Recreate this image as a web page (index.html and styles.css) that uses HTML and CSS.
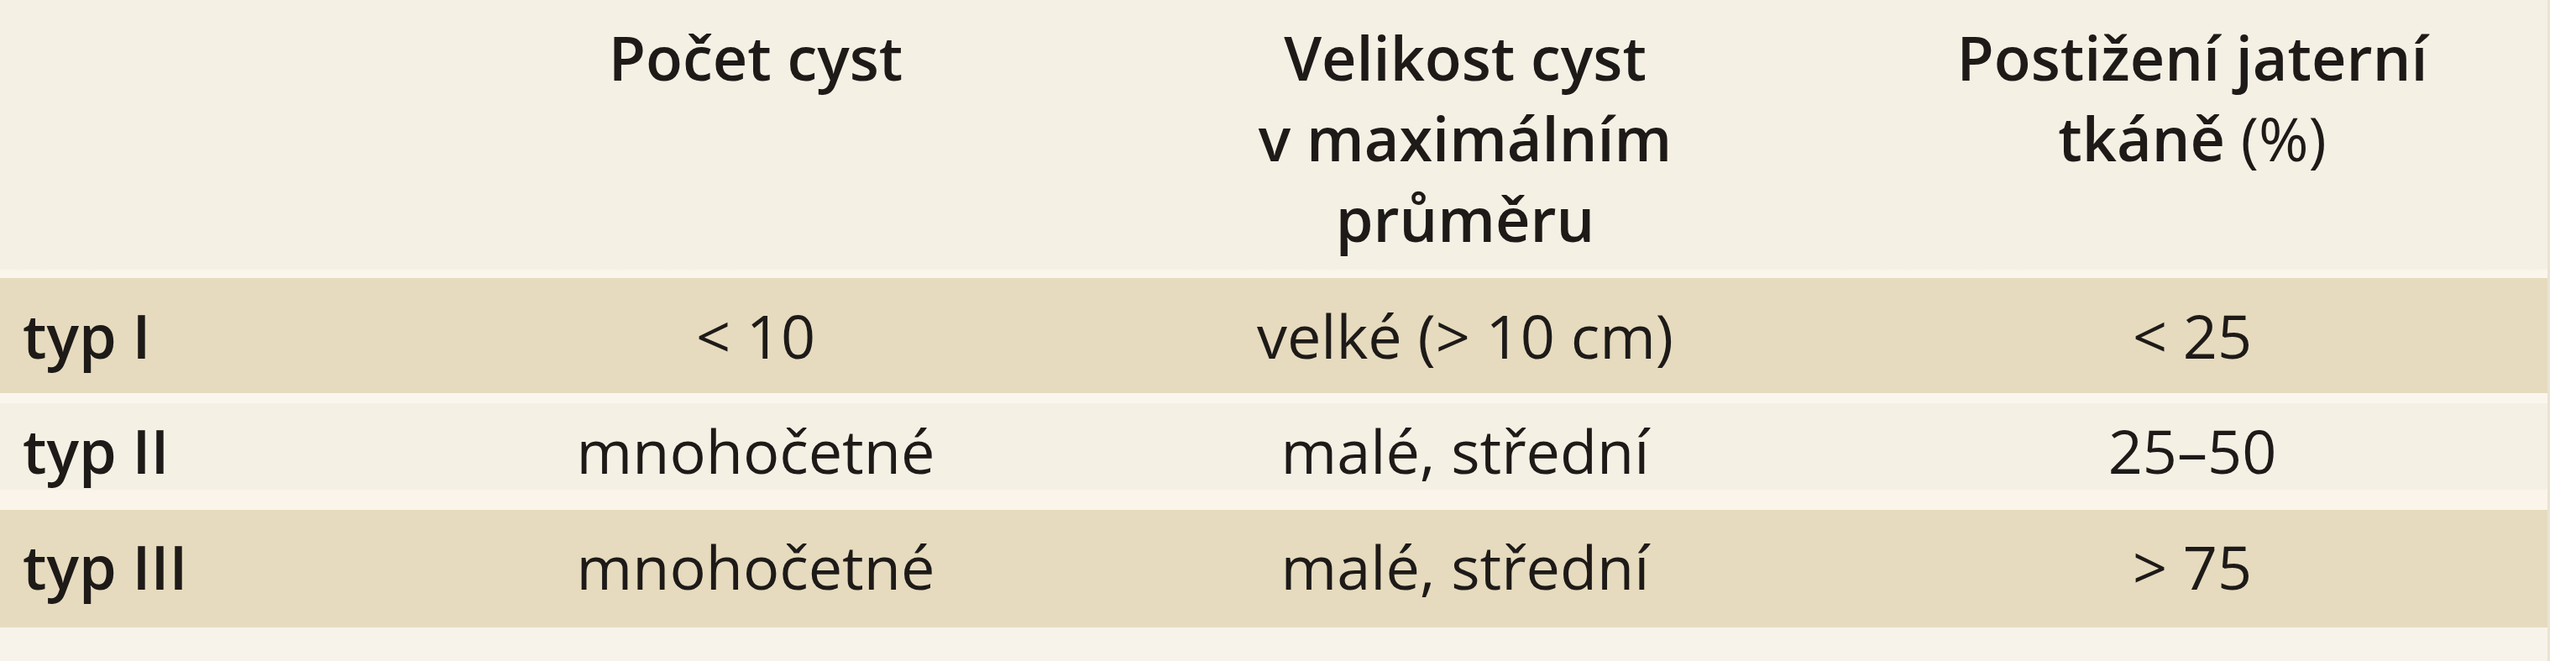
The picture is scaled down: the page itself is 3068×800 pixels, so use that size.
FILE: index.html
```html
<!DOCTYPE html>
<html lang="cs">
<head>
<meta charset="utf-8">
<title>Typy cyst</title>
<link rel="stylesheet" href="styles.css">
</head>
<body>
<div class="table">
  <div class="row head">
    <div class="cell label"></div>
    <div class="cell">Počet cyst</div>
    <div class="cell">Velikost cyst<br>v maximálním<br>průměru</div>
    <div class="cell">Postižení jaterní<br>tkáně <span class="reg">(%)</span></div>
  </div>
  <div class="row tan r1">
    <div class="cell label">typ I</div>
    <div class="cell">&lt; 10</div>
    <div class="cell">velké (&gt; 10 cm)</div>
    <div class="cell">&lt; 25</div>
  </div>
  <div class="row light r2">
    <div class="cell label">typ II</div>
    <div class="cell">mnohočetné</div>
    <div class="cell">malé, střední</div>
    <div class="cell">25–50</div>
  </div>
  <div class="row tan r3">
    <div class="cell label">typ III</div>
    <div class="cell">mnohočetné</div>
    <div class="cell">malé, střední</div>
    <div class="cell">&gt; 75</div>
  </div>
  <div class="foot"></div>
</div>
</body>
</html>
```
FILE: styles.css
```css
html, body {
  margin: 0;
  padding: 0;
  background: #ffffff;
}

body {
  width: 3068px;
  height: 800px;
  overflow: hidden;
  font-family: "Open Sans", "Noto Sans", "DejaVu Sans", sans-serif;
  color: #1d1a18;
}

.table {
  width: 3034px;
  background: #f5f0e4;
  border-right: 3px solid #ebe3d3;
}

.row {
  display: grid;
  grid-template-columns: 498px 804px 886px 846px;
  font-size: 72px;
  line-height: 96px;
  box-sizing: border-box;
}

.cell {
  text-align: center;
}

.cell.label {
  text-align: left;
  padding-left: 27px;
  font-weight: 600;
}

.head {
  height: 331px;
  padding-top: 20px;
  font-weight: 600;
  background: linear-gradient(to bottom, #f5f0e4 0, #f5f0e4 320px, #fbf6ec 322px, #fbf6ec 331px);
}

.head .reg {
  font-weight: 400;
}

.tan {
  background: #e6dbbe;
}

.r1 {
  height: 137px;
  padding-top: 20px;
}

.r2 {
  height: 139px;
  padding-top: 20px;
  background: linear-gradient(to bottom, #fbf6ed 0, #fbf6ed 12px, #f5f0e4 12px, #f5f0e4 115px, #faf4ea 115px, #faf4ea 139px);
}

.r3 {
  height: 140px;
  padding-top: 19px;
}

.foot {
  height: 40px;
  background: #f8f3ea;
}
```
